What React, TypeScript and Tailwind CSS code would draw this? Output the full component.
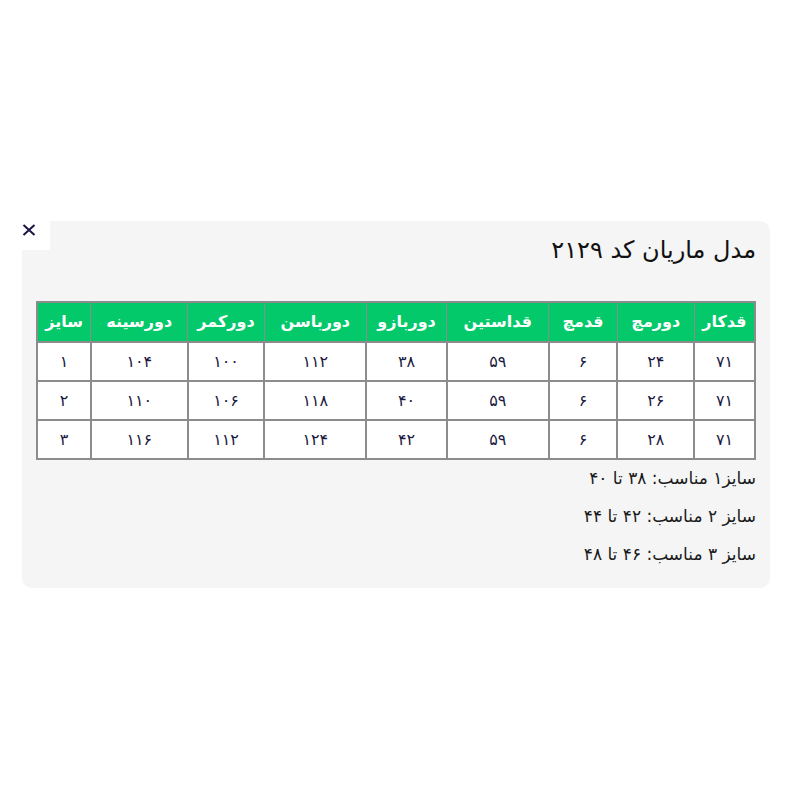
import React from 'react';

const headers = [
  { label: 'قدکار', w: 'w-[61px]' },
  { label: 'دورمچ', w: 'w-[77px]' },
  { label: 'قدمچ', w: 'w-[69px]' },
  { label: 'قداستین', w: 'w-[102px]' },
  { label: 'دوربازو', w: 'w-[81px]' },
  { label: 'دورباسن', w: 'w-[102px]' },
  { label: 'دورکمر', w: 'w-[77px]' },
  { label: 'دورسینه', w: 'w-[97px]' },
  { label: 'سایز', w: 'w-[54px]' },
];

const rows = [
  ['۷۱', '۲۴', '۶', '۵۹', '۳۸', '۱۱۲', '۱۰۰', '۱۰۴', '۱'],
  ['۷۱', '۲۶', '۶', '۵۹', '۴۰', '۱۱۸', '۱۰۶', '۱۱۰', '۲'],
  ['۷۱', '۲۸', '۶', '۵۹', '۴۲', '۱۲۴', '۱۱۲', '۱۱۶', '۳'],
];

const notes = ['سایز۱ مناسب: ۳۸ تا ۴۰', 'سایز ۲ مناسب: ۴۲ تا ۴۴', 'سایز ۳ مناسب: ۴۶ تا ۴۸'];

export default function App() {
  return (
    <div className="min-h-[800px] w-[800px] bg-white pt-[221px] pl-[22px] font-['DejaVu_Sans',sans-serif]">
      <div className="relative w-[748px] h-[367px] rounded-[10px] bg-[#f5f5f5] px-[14px]" dir="rtl">
        {/* close */}
        <div className="absolute left-[-14px] top-[-11px] w-[42px] h-[40px] bg-white flex items-center justify-center" dir="ltr">
          <svg width="14" height="12" viewBox="0 0 14 12">
            <path d="M1.5 1 L12.5 11 M12.5 1 L1.5 11" stroke="#1c1446" strokeWidth="2" />
          </svg>
        </div>

        <h1 className="pt-[13px] text-[24px] leading-[32px] text-[#111]">مدل ماریان کد ۲۱۲۹</h1>

        <table className="mt-[35px] w-[720px] border-collapse border-2 border-[#8c8c8c] text-center">
          <thead>
            <tr className="h-[40px] bg-[#03c96a]">
              {headers.map((h) => (
                <th key={h.label} className={`${h.w} border border-[#8c8c8c] text-white text-[16px] font-bold`}>
                  {h.label}
                </th>
              ))}
            </tr>
          </thead>
          <tbody>
            {rows.map((r, i) => (
              <tr key={i} className="h-[39px] bg-white">
                {r.map((c, j) => (
                  <td key={j} className="border-2 border-[#8c8c8c] text-[16px] text-[#1a1a40]">
                    {c}
                  </td>
                ))}
              </tr>
            ))}
          </tbody>
        </table>

        <div className="mt-[5px] flex flex-col gap-[11px] text-[17px] leading-[27px] text-[#1a1a1a]">
          {notes.map((n) => (
            <div key={n}>{n}</div>
          ))}
        </div>
      </div>
    </div>
  );
}
